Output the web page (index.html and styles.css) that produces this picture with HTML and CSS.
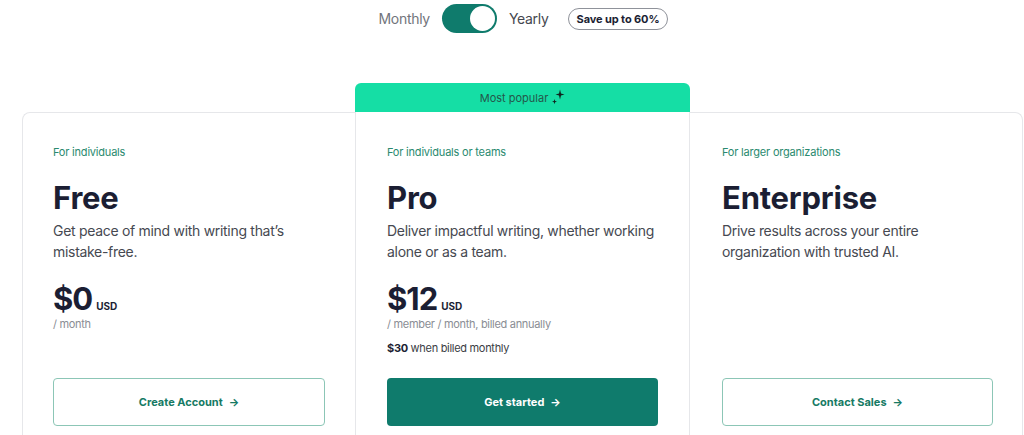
FILE: index.html
```html
<!DOCTYPE html>
<html lang="en">
<head>
<meta charset="utf-8">
<title>Pricing</title>
<link rel="stylesheet" href="styles.css">
</head>
<body>
<div class="page">
  <div class="billing">
    <span class="billing-label">Monthly</span>
    <span class="switch"><span class="knob"></span></span>
    <span class="billing-label active">Yearly</span>
    <span class="save">Save up to 60%</span>
  </div>

  <div class="plans">
    <div class="plan plan-first">
      <div class="plan-body">
        <p class="audience">For individuals</p>
        <h2 class="plan-name">Free</h2>
        <p class="plan-desc">Get peace of mind with writing that’s mistake-free.</p>
        <div class="price"><span class="amount">$0</span><span class="currency">USD</span></div>
        <p class="period">/ month</p>
        <a class="btn btn-outline" href="#">Create Account <span class="arrow">→</span></a>
      </div>
    </div>

    <div class="plan plan-featured">
      <div class="badge">Most popular
        <svg class="sparkle" width="14" height="16" viewBox="0 0 14 16" aria-hidden="true">
          <path d="M9 0.5 L10 4.5 L13.5 5.5 L10 6.5 L9 10.5 L8 6.5 L4.5 5.5 L8 4.5 Z" fill="#10261f"/>
          <path d="M3.5 10 L4.1 12 L6 12.6 L4.1 13.2 L3.5 15.2 L2.9 13.2 L1 12.6 L2.9 12 Z" fill="#10261f"/>
        </svg>
      </div>
      <div class="plan-body">
        <p class="audience">For individuals or teams</p>
        <h2 class="plan-name">Pro</h2>
        <p class="plan-desc">Deliver impactful writing, whether working alone or as a team.</p>
        <div class="price"><span class="amount">$12</span><span class="currency">USD</span></div>
        <p class="period">/ member / month, billed annually</p>
        <p class="monthly"><strong>$30</strong> when billed monthly</p>
        <a class="btn btn-solid" href="#">Get started <span class="arrow">→</span></a>
      </div>
    </div>

    <div class="plan plan-last">
      <div class="plan-body">
        <p class="audience">For larger organizations</p>
        <h2 class="plan-name">Enterprise</h2>
        <p class="plan-desc">Drive results across your entire organization with trusted AI.</p>
        <div class="price-spacer"></div>
        <a class="btn btn-outline" href="#">Contact Sales <span class="arrow">→</span></a>
      </div>
    </div>
  </div>
</div>
</body>
</html>
```

FILE: styles.css
```css
* { box-sizing: border-box; }
html, body { margin: 0; padding: 0; background: #fff; }
body {
  font-family: Inter, "Noto Sans", "Liberation Sans", sans-serif;
  color: #1b1e33;
  overflow: hidden;
}
.page {
  margin-left: 22px;
  width: 1001px;
}
.billing {
  display: flex;
  align-items: center;
  justify-content: center;
  padding-top: 4px;
  padding-left: 2px;
  height: 33px;
}
.billing-label {
  font-size: 14px;
  letter-spacing: -0.3px;
  color: #72757c;
}
.billing-label.active { color: #45484f; }
.switch {
  width: 55px;
  height: 29px;
  border-radius: 15px;
  background: #0f7b6c;
  margin: 0 12px;
  display: flex;
  align-items: center;
  justify-content: flex-end;
  padding: 2px;
}
.knob {
  width: 25px;
  height: 25px;
  border-radius: 50%;
  background: #fff;
}
.save {
  margin-left: 19px;
  font-size: 11px;
  font-weight: 700;
  letter-spacing: -0.1px;
  color: #1b1e33;
  border: 1px solid #8f929a;
  border-radius: 11px;
  padding: 3px 8px;
  line-height: 14px;
}

.plans {
  display: grid;
  grid-template-columns: 333px 335px 333px;
  margin-top: 50px;
  padding-top: 29px;
}
.plan {
  border-top: 1px solid #e6e7ea;
  height: 323px;
}
.plan-first {
  border-left: 1px solid #e6e7ea;
  border-top-left-radius: 8px;
}
.plan-last {
  border-right: 1px solid #e6e7ea;
  border-top-right-radius: 8px;
}
.plan-featured {
  border: 1px solid #e6e7ea;
  border-top: none;
  border-bottom: none;
  position: relative;
}
.badge {
  position: absolute;
  left: -1px;
  right: -1px;
  top: -29px;
  height: 29px;
  background: #15dea5;
  border-radius: 6px 6px 0 0;
  display: flex;
  align-items: center;
  justify-content: center;
  font-size: 11px;
  color: #24574a;
  gap: 3px;
}
.sparkle { margin-top: -1px; }
.plan-body {
  padding: 32px 30px 0 30px;
  display: flex;
  flex-direction: column;
}
.plan-featured .plan-body { padding: 33px 31px 0 31px; }
.plan-last .plan-body { padding: 32px 29px 0 32px; }
.audience {
  margin: 0;
  font-size: 11px;
  line-height: 14px;
  letter-spacing: -0.2px;
  color: #2a8a6f;
}
.plan-name {
  margin: 21px 0 0 0;
  font-size: 31px;
  line-height: 36px;
  font-weight: 700;
  color: #1b1e33;
  letter-spacing: -0.2px;
}
.plan-desc {
  margin: 4px 0 0 0;
  font-size: 14px;
  line-height: 21px;
  letter-spacing: -0.3px;
  color: #464951;
  max-width: 275px;
}
.price {
  margin-top: 20px;
  display: flex;
  align-items: baseline;
}
.amount {
  font-size: 31px;
  font-weight: 700;
  line-height: 34px;
  letter-spacing: -1px;
  color: #1b1e33;
}
.currency {
  font-size: 10px;
  font-weight: 700;
  margin-left: 4px;
  color: #1b1e33;
}
.period {
  margin: 1px 0 0 0;
  font-size: 11px;
  line-height: 14px;
  letter-spacing: -0.3px;
  color: #8a8d94;
}
.monthly {
  margin: 10px 0 0 0;
  font-size: 11px;
  line-height: 14px;
  letter-spacing: -0.3px;
  color: #3a3d44;
}
.monthly strong { color: #1b1e33; }
.btn {
  margin-top: 47px;
  height: 48px;
  border-radius: 4px;
  display: flex;
  align-items: center;
  justify-content: center;
  font-size: 11px;
  font-weight: 700;
  text-decoration: none;
  gap: 6px;
}
.plan-featured .btn { margin-top: 23px; }
.btn-outline {
  border: 1px solid #8cc6b6;
  color: #167a64;
}
.btn-solid {
  background: #0f7b6c;
  color: #fff;
}
.price-spacer { height: 69px; }
```
